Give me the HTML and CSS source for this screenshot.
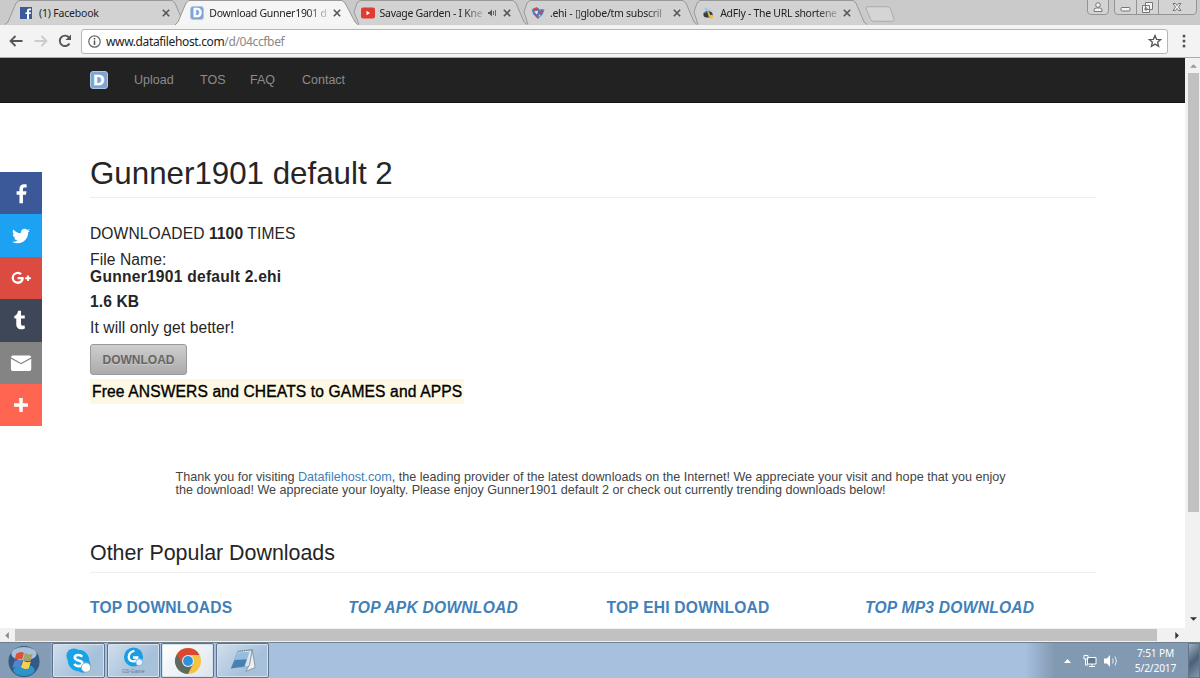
FILE: index.html
```
<!DOCTYPE html>
<html lang="en">

<head>
    <meta charset="UTF-8">
    <meta name="viewport" content="width=device-width, initial-scale=1.0">
    <title>Download Gunner1901 default 2</title>
    <link rel="stylesheet" href="styles.css">
</head>

<body>
    <!-- tabs -->
    <header class="tabs">
        <div class="tab">
            <svg class="tab-shape" viewBox="0 0 184 25"><path d="M0 24.5 3 22 11 3 14 .5H167L170 3 178 22 181 24.5"/></svg>
            <svg class="fav" viewBox="0 0 12 12"><rect width="12" height="12" fill="#3b5998"/><path d="M7 12V7H5.500V5.200H7V3.800C7 2.200 8 1.500 9.300 1.500H11V3.300H10C9.200 3.300 9 3.600 9 4.200V5.200H11L10.700 7H9V12z" fill="#fff"/></svg>
            <span class="tab-name">(1) Facebook</span>
            <svg class="close" viewBox="0 0 8 8"><path d="M.8.8 7.200 7.200M7.200.8.8 7.200"/></svg>
        </div>
        <div class="tab active">
            <svg class="tab-shape" viewBox="0 0 184 25"><path d="M0 25 3 22 11 3 14 .5H167L170 3 180 22 183 25"/></svg>
            <span class="d-logo small">D</span>
            <span class="tab-name fade">Download Gunner1901 d</span>
            <svg class="close" viewBox="0 0 8 8"><path d="M.8.8 7.200 7.200M7.200.8.8 7.200"/></svg>
        </div>
        <div class="tab">
            <svg class="tab-shape" viewBox="0 0 184 25"><path d="M13 24.500 8 12 11 3 14 .5H167L170 3 178 22 181 24.5"/></svg>
            <svg class="fav wide" viewBox="0 0 14 11"><rect width="14" height="11" rx="2" fill="#e03c31"/><path d="M5.500 3.300 9 5.500 5.500 7.700z" fill="#fff"/></svg>
            <span class="tab-name fade">Savage Garden - I Kne</span>
            <svg class="sound" viewBox="0 0 10 8"><path d="M0 3h1.500L4 .5v7L1.500 5H0z" fill="#555"/><path d="M5.500 2v4M7.500 1v6" stroke="#666" fill="none"/></svg>
            <svg class="close" viewBox="0 0 8 8"><path d="M.8.8 7.200 7.200M7.200.8.8 7.200"/></svg>
        </div>
        <div class="tab">
            <svg class="tab-shape" viewBox="0 0 184 25"><path d="M12 24.500 8 12 11 3 14 .5H167L170 3 178 22 181 24.5"/></svg>
            <svg class="fav wide" viewBox="0 0 14 13"><path d="M0 3 7 1 14 3 12 8 7 13 2 8z" fill="#4f7fc4"/><path d="M1 2 6 0 7 3 3 4zM8 4 13 4 11 7 8 7zM3 7 7 9 6 12z" fill="#d9473c"/><path d="M3 5 7 4 6 8zM8 1 11 2 9 3zM8 9 10 8 8 11z" fill="#eef"/></svg>
            <span class="tab-name fade">.ehi - ▯globe/tm subscril</span>
            <svg class="close" viewBox="0 0 8 8"><path d="M.8.8 7.200 7.200M7.200.8.8 7.200"/></svg>
        </div>
        <div class="tab">
            <svg class="tab-shape" viewBox="0 0 184 25"><path d="M12 24.500 8 12 11 3 14 .5H167L170 3 178 22 181 24.5"/></svg>
            <svg class="fav wide" viewBox="0 0 14 13"><path d="M5 0 8 4 6 6 3 2zM9 1 10 4 8 5z" fill="#9fc4e6"/><ellipse cx="7" cy="8" rx="5" ry="3.500" fill="#3c3c3c"/><path d="M6 5 8 5 10 10 8 11z" fill="#e3bd3e"/><circle cx="10.500" cy="10.500" r="2" fill="#e9c33f"/><path d="M2 6 4 5 5 7z" fill="#5b8cc0"/></svg>
            <span class="tab-name fade">AdFly - The URL shortene</span>
            <svg class="close" viewBox="0 0 8 8"><path d="M.8.8 7.200 7.200M7.200.8.8 7.200"/></svg>
        </div>
        <svg class="new-tab" viewBox="0 0 32 16"><path d="M2.500.5H23Q25 .5 26 2L30 13.500Q30 15 29 15.500H9Q6.500 15.500 6 14L1 2Q1 .5 2.500.5z" fill="#d5d5d5" stroke="#aaa"/></svg>
        <div class="window-buttons">
            <svg class="user" viewBox="0 0 22 15"><path d="M.5 0V11Q.5 14.500 4 14.500H18Q21.500 14.500 21.500 11V0" class="frame"/><circle cx="11" cy="5" r="2.300" class="ico"/><path d="M7 11.500V10Q7 8 9.500 8H12.500Q15 8 15 10V11.500z" class="ico"/></svg>
            <svg class="win" viewBox="0 0 83 15"><path d="M.5 0V11Q.5 14.500 4 14.500H79Q82.500 14.500 82.500 11V0M22.500 0V14M44.500 0V14" class="frame"/><rect x="7" y="7.500" width="9" height="3.500" rx="1" class="ico"/><path d="M31.500 2.500H38.500V9.500H31.500zM28.500 5.500H35.500V12.500H28.500zM31 8H33V10H31z" class="ico"/><path d="M59 3.500H61.500L63 5.500 64.500 3.500H67L64.500 7 67 10.500H64.500L63 8.500 61.500 10.500H59L61.500 7z" class="ico"/></svg>
        </div>
    </header>

    <!-- address bar -->
    <div class="toolbar">
        <svg class="nav-arrow" viewBox="0 0 14 12"><path d="M13.500 6H2M6.500 1 1.500 6 6.500 11"/></svg>
        <svg class="nav-arrow off" viewBox="0 0 14 12"><path d="M.5 6H12M7.500 1 12.500 6 7.500 11"/></svg>
        <svg class="reload" viewBox="0 0 14 14"><path d="M11.500 9.500A5.200 5.200 0 1 1 11 3.500" fill="none" stroke="#555" stroke-width="1.900"/><path d="M13 .5V6H7.500z" fill="#555"/></svg>
        <div class="address">
            <svg class="info" viewBox="0 0 13 13"><circle cx="6.500" cy="6.500" r="5.700" fill="none" stroke="#666" stroke-width="1.200"/><path d="M6.500 5.500V10M6.500 3V4.500" stroke="#555" stroke-width="1.500"/></svg>
            <span class="url">www.datafilehost.com<span class="path">/d/04ccfbef</span></span>
            <svg class="star" viewBox="0 0 14 14"><path d="M7 1.500 8.600 5.300 12.700 5.600 9.600 8.200 10.600 12.300 7 10.100 3.400 12.300 4.400 8.200 1.300 5.600 5.400 5.300z"/></svg>
        </div>
        <svg class="menu" viewBox="0 0 4 14"><circle cx="2" cy="2" r="1.500"/><circle cx="2" cy="7" r="1.500"/><circle cx="2" cy="12" r="1.500"/></svg>
    </div>

    <div class="viewport">
        <main class="page">
            <nav class="navbar">
                <span class="d-logo">D</span>
                <a class="nav-upload">Upload</a>
                <a class="nav-tos">TOS</a>
                <a class="nav-faq">FAQ</a>
                <a class="nav-contact">Contact</a>
            </nav>

            <section class="container">
                <h1>Gunner1901 default 2</h1>
                <div class="file-info">
                    <p class="times">DOWNLOADED <b>1100</b> TIMES</p>
                    <p class="file-label">File Name:</p>
                    <p class="file-name"><b>Gunner1901 default 2.ehi</b></p>
                    <p class="size"><b>1.6 KB</b></p>
                    <p class="desc">It will only get better!</p>
                </div>
                <button class="download">DOWNLOAD</button>
                <div><a class="promo">Free ANSWERS and CHEATS to GAMES and APPS</a></div>

                <p class="thanks">
                    Thank you for visiting <a>Datafilehost.com</a>, the leading provider of the latest downloads on the Internet! We appreciate your visit and hope that you enjoy<br>
                    the download! We appreciate your loyalty. Please enjoy Gunner1901 default 2 or check out currently trending downloads below!
                </p>

                <h2>Other Popular Downloads</h2>
                <div class="popular">
                    <a>TOP DOWNLOADS</a>
                    <a class="it">TOP APK DOWNLOAD</a>
                    <a>TOP EHI DOWNLOAD</a>
                    <a class="it">TOP MP3 DOWNLOAD</a>
                </div>
            </section>

            <!-- share buttons float over the page -->
            <aside class="share">
                <a class="fb"><svg viewBox="0 0 32 32"><path d="M17.500 26V17.300H20.600L21.100 13.700H17.500V11.600C17.500 10.500 17.900 9.800 19.400 9.800H21.300V6.600C20.900 6.500 19.800 6.400 18.600 6.400 15.800 6.400 13.900 8 13.900 11V13.700H10.900V17.300H13.900V26z"/></svg></a>
                <a class="tw"><svg viewBox="0 0 32 32"><path d="M28 8.600a9.900 9.900 0 0 1-2.800.8 5 5 0 0 0 2.200-2.700c-1 .6-2 1-3.100 1.200a4.900 4.900 0 0 0-8.500 3.300c0 .4 0 .8.100 1.100-4-.2-7.700-2.100-10.100-5.100a4.900 4.900 0 0 0 1.500 6.600c-.8 0-1.600-.3-2.200-.6v.1a4.900 4.900 0 0 0 3.900 4.800 5 5 0 0 1-2.200.1 4.900 4.900 0 0 0 4.600 3.400A9.900 9.900 0 0 1 4 23.600a14 14 0 0 0 7.500 2.200c9.100 0 14-7.500 14-14v-.6A10 10 0 0 0 28 8.600z"/></svg></a>
                <a class="gp"><svg viewBox="0 0 32 32"><path d="M11.500 14.500v3.200h4.600c-.5 1.700-1.900 2.900-4.500 2.900a5 5 0 0 1 0-10c1.300 0 2.400.4 3.300 1.300l2.300-2.300A8.200 8.200 0 1 0 11.600 24c4.900 0 8-3.300 8-7.900 0-.6-.1-1.100-.2-1.600zM24 12.500h2.500v2.500H29v2.500h-2.500V20H24v-2.500h-2.500V15H24z"/></svg></a>
                <a class="tm"><svg viewBox="0 0 32 32"><path d="M19.900 22.100c-.4.200-1.200.4-1.800.4-1.700 0-2.100-1.200-2.100-2.100v-6.200h4.300v-3.300H16V5.500h-3.200c0 0-.2 0-.2.200-.2 1.600-1 4.500-4.200 5.700v2.800h2.200v6.900c0 2.400 1.700 5.700 6.300 5.600 1.600 0 3.300-.7 3.700-1.200z"/></svg></a>
                <a class="ml"><svg viewBox="0 0 32 32"><path d="M4.500 9.500Q4.800 7.500 6.500 7.500H26Q27.500 7.500 27.700 9.500L16 16z"/><path d="M4.500 11 16 17.500 27.700 11V23Q27.700 25 25.700 25H6.500Q4.500 25 4.500 23z"/></svg></a>
                <a class="more"><svg viewBox="0 0 32 32"><path d="M14 8h4v6h6v4h-6v6h-4v-6H8v-4h6z"/></svg></a>
            </aside>
        </main>

        <div class="scroll-y">
            <svg viewBox="0 0 8 5"><path d="M0 4 4 0 8 4z" fill="#999"/></svg>
            <i class="thumb"></i>
            <svg viewBox="0 0 8 5"><path d="M0 0 4 4 8 0z" fill="#333"/></svg>
        </div>
    </div>

    <div class="scroll-x">
        <svg viewBox="0 0 5 8"><path d="M4 0 0 4 4 8z" fill="#888"/></svg>
        <i class="thumb"></i>
        <svg viewBox="0 0 5 8"><path d="M0 0 4 4 0 8z" fill="#333"/></svg>
    </div>

    <footer class="taskbar">
        <div class="start">
            <svg viewBox="0 0 34 34"><circle cx="17" cy="17" r="16" fill="#315b84"/><ellipse cx="17" cy="9" rx="13" ry="7" fill="#a9c1d8"/><ellipse cx="17" cy="26" rx="11" ry="6" fill="#2d93c8"/><path d="M9 9Q13 6 17 8L15 15Q11 13 7 16z" fill="#dc5236"/><path d="M18 8Q22 11 26 9L24 16Q20 18 16 15z" fill="#a5a268"/><path d="M7 17Q11 14 15 16L13 23Q9 21 5 24z" fill="#5284cf"/><path d="M16 16Q20 19 24 17L22 24Q18 26 14 23z" fill="#ffcf48"/></svg>
        </div>
        <div class="task">
            <svg viewBox="0 0 30 30"><circle cx="9.500" cy="9.500" r="8" fill="#18a2e8"/><circle cx="19.500" cy="19.500" r="8" fill="#18a2e8"/><circle cx="14.500" cy="14.500" r="11.500" fill="#18a2e8"/><path d="M18.500 10.500Q17 8.500 14.200 8.500 10.500 8.500 10.500 11.300 10.500 13.500 14.500 14.400 18.700 15.300 18.700 17.600 18.700 20.500 14.700 20.500 11.500 20.500 10 18" fill="none" stroke="#fff" stroke-width="2.800"/><circle cx="22.500" cy="22" r="5" fill="#fff" stroke="#9aa"/></svg>
        </div>
        <div class="task gclub">
            <svg viewBox="0 0 24 22"><circle cx="12" cy="10.500" r="10" fill="#1c9de0"/><path d="M13 4Q7 5 7 10.500 7 15 12 15 16 15 16 11H11.500" fill="none" stroke="#fff" stroke-width="2.400"/><circle cx="18" cy="16" r="3.600" fill="#eef" stroke="#6bb8e4"/></svg>
            <small>GS-Game</small>
        </div>
        <div class="task current">
            <svg viewBox="0 0 28 28"><circle cx="14" cy="14" r="13" fill="#f5c242"/><path d="M14 14 2.740 7.500A13 13 0 0 0 14 27L19 17z" fill="#5c6a61"/><path d="M14 8H25.500A13 13 0 0 0 2.740 7.500L8.500 17z" fill="#da4733"/><circle cx="14" cy="14" r="6" fill="#e9eef2"/><circle cx="14" cy="14" r="4.900" fill="#2d93dc"/></svg>
        </div>
        <div class="task">
            <svg viewBox="0 0 30 28"><path d="M9 4 25 2 22 20 3 21z" fill="#dbe7f1" stroke="#93a6b8"/><path d="M9 5 22 4 17 20 2 22z" fill="#94bddf"/><path d="M6 13 19 12 16.500 20 2 22z" fill="#4a7fb2"/><path d="M25 2 28 21 18 25 22 18z" fill="#edf1f4" stroke="#8794a1"/><path d="M10 3.500 25 2" stroke="#596b7b" stroke-dasharray="1 1"/></svg>
        </div>
        <div class="tray">
            <svg class="up" viewBox="0 0 7 4"><path d="M0 4 3.500 0 7 4z" fill="#fff"/></svg>
            <svg class="net" viewBox="0 0 14 14"><path d="M4.500 3.500H13V10H4.500z" fill="#64788f" stroke="#fff"/><path d="M6 12.500H12M9 10V12M2.500 5V11H5M1 1.500H5V5H1z" fill="none" stroke="#fff"/></svg>
            <svg class="vol" viewBox="0 0 14 14"><path d="M0 4.500H3L6 1V13L3 9.500H0z" fill="#fff"/><path d="M8.500 4.500Q10 7 8.500 9.500M11 2.500Q14 7 11 11.500" fill="none" stroke="#e4edf5"/></svg>
            <div class="clock">7:51 PM<br>5/2/2017</div>
            <i class="show-desktop"></i>
        </div>
    </footer>
</body>

</html>
```
FILE: styles.css
```
* {
    padding: 0;
    margin: 0;
    box-sizing: border-box;
}

:root {
    --link: #4180b8;
    --text: #252525;
    --scroll: #c1c1c1;
}

body {
    width: 1200px;
    height: 678px;
    overflow: hidden;
    display: flex;
    flex-direction: column;
    background: #fff;
    color: var(--text);
    font-family: "Liberation Sans", Arial, sans-serif;
}

svg {
    display: block;
    flex: none;
}

/* tabs */
.tabs {
    height: 25px;
    flex: none;
    display: flex;
    padding-left: 5px;
    background: #cacaca;
    font-family: "Noto Sans", sans-serif;
    font-size: 10.5px;
    letter-spacing: -.2px;
}

.tab {
    position: relative;
    width: 170.3px;
    flex: none;
    height: 25px;
    padding: 1px 5px 0 15px;
    display: flex;
    align-items: center;
}

.tab-shape {
    position: absolute;
    left: 0;
    top: 0;
    width: 184px;
    height: 25px;
}

.tab-shape path {
    fill: #d2d2d2;
    stroke: #999;
}

.tab.active {
    z-index: 1;
}

.active .tab-shape path {
    fill: #f5f5f5;
}

.fav,
.tab-name,
.close,
.sound,
.tab .d-logo {
    position: relative;
}

.fav {
    width: 12px;
    height: 12px;
    margin-right: 7px;
}

.fav.wide {
    width: 14px;
    margin-right: 5px;
}

.tab-name {
    flex: 1;
    min-width: 0;
    white-space: nowrap;
    line-height: 16px;
    color: #222;
}

.fade {
    letter-spacing: -.28px;
    -webkit-mask-image: linear-gradient(to right, #000 82%, transparent 104%);
    mask-image: linear-gradient(to right, #000 82%, transparent 104%);
}

.close {
    width: 8px;
    height: 8px;
    margin-left: 5px;
}

.close path {
    stroke: #555;
    stroke-width: 1.6;
}

.sound {
    width: 10px;
    height: 8px;
    margin: 0 0 0 6px;
}

.new-tab {
    width: 31px;
    height: 16px;
    margin: 6px 0 0 9px;
}

.window-buttons {
    display: flex;
    gap: 5px;
    margin-left: auto;
    padding-right: 3px;
}

.user {
    width: 22px;
    height: 15px;
}

.win {
    width: 83px;
    height: 15px;
}

.frame {
    fill: #d3d3d3;
    stroke: #949494;
}

.ico {
    fill: #f4f4f4;
    stroke: #777;
}

.d-logo {
    width: 18px;
    height: 18px;
    flex: none;
    border-radius: 3px;
    background: #7da4d2;
    border: 1px solid #b0c8e4;
    color: #fff;
    font: bold 15px/16px "Liberation Sans", sans-serif;
    text-align: center;
    -webkit-text-stroke: .6px #fff;
}

.d-logo.small {
    width: 14px;
    height: 14px;
    margin-right: 5px;
    font-size: 12px;
    line-height: 12px;
    letter-spacing: 0;
}

/* address bar */
.toolbar {
    height: 33px;
    flex: none;
    display: flex;
    align-items: center;
    padding: 0 14px 0 9px;
    background: #f3f3f3;
    border-bottom: 1px solid #aaa;
}

.nav-arrow {
    width: 14px;
    height: 12px;
    margin-right: 11px;
}

.nav-arrow.off {
    margin-right: 10px;
}

.nav-arrow path {
    fill: none;
    stroke: #555;
    stroke-width: 1.8;
}

.nav-arrow.off path {
    stroke: #ccc;
}

.reload {
    width: 14px;
    height: 14px;
}

.address {
    flex: 1;
    height: 25px;
    margin: 0 14px 0 9px;
    padding: 0 5px 0 6px;
    display: flex;
    align-items: center;
    background: #fff;
    border: 1px solid #b5b5b5;
    border-radius: 3px;
}

.info {
    width: 13px;
    height: 13px;
    margin-right: 5px;
}

.url {
    flex: 1;
    padding-top: 1px;
    font: 12px/20px "Noto Sans", sans-serif;
    letter-spacing: -.36px;
    color: #222;
}

.path {
    color: #888;
}

.star {
    width: 14px;
    height: 14px;
}

.star path {
    fill: none;
    stroke: #555;
    stroke-width: 1.3;
}

.menu {
    width: 4px;
    height: 14px;
    fill: #555;
}

/* page */
.viewport {
    height: 570px;
    flex: none;
    display: flex;
}

.page {
    position: relative;
    width: 1185px;
    overflow: hidden;
}

.navbar {
    height: 45px;
    display: flex;
    align-items: center;
    padding-left: 90px;
    background: #222;
    border-bottom: 1px solid #111;
    color: #8c8c8c;
    font-size: 12.5px;
}

.nav-upload {
    margin-left: 26px;
    width: 66px;
}

.nav-tos {
    width: 50px;
}

.nav-faq {
    width: 52px;
}

.container {
    width: 1096px;
    padding-left: 90px;
}

h1 {
    height: 95px;
    padding-top: 51px;
    border-bottom: 1px solid #eee;
    font-size: 31.3px;
    font-weight: normal;
    line-height: 40px;
}

.file-info {
    padding-top: 27px;
    font-size: 15.6px;
    line-height: 17px;
    letter-spacing: .1px;
}

.file-name {
    letter-spacing: .25px;
}

.times {
    margin-bottom: 9px;
}

.file-name {
    margin-bottom: 8px;
}

.size {
    margin-bottom: 9px;
}

.desc {
    margin-bottom: 8px;
}

.download {
    display: block;
    width: 97px;
    height: 31px;
    border: 1px solid #999;
    border-radius: 3px;
    background: linear-gradient(#cecece, #ababab);
    color: #666;
    font: bold 12px "Liberation Sans", sans-serif;
    text-shadow: 0 1px 0 #ccc;
}

.promo {
    display: inline-block;
    height: 25px;
    margin-top: 4px;
    padding: 0 2px;
    background: #fcf8e3;
    color: #000;
    font-size: 15.6px;
    line-height: 25px;
    letter-spacing: .14px;
    -webkit-text-stroke: .35px #000;
}

.thanks {
    margin-top: 67px;
    padding-left: 85.5px;
    font-size: 12.6px;
    line-height: 13.3px;
    color: #444;
    white-space: nowrap;
}

.thanks a {
    color: var(--link);
}

h2 {
    height: 37px;
    margin-top: 38px;
    padding-top: 1px;
    border-bottom: 1px solid #eee;
    font-size: 21.4px;
    font-weight: normal;
    line-height: 32px;
}

.popular {
    display: grid;
    grid-template-columns: repeat(4, 258.3px);
    padding-top: 26px;
    color: var(--link);
    font-size: 15.6px;
    font-weight: bold;
    line-height: 18px;
    letter-spacing: .2px;
}

.it {
    font-style: italic;
    letter-spacing: .25px;
}

.share {
    position: absolute;
    left: 0;
    top: 114px;
    width: 42px;
}

.share a {
    height: 42.4px;
    display: flex;
    align-items: center;
    justify-content: center;
}

.share svg {
    width: 28px;
    height: 28px;
    fill: #fff;
}

.share .fb svg {
    width: 31px;
    height: 31px;
}

.share .tw svg,
.share .gp svg {
    width: 24px;
    height: 24px;
}

.fb { background: #3b5998; }
.tw { background: #1da1f2; }
.gp { background: #dc4b3f; }
.tm { background: #3d4757; }
.ml { background: #848484; }
.more { background: #ff6550; }

/* scrollbars */
.scroll-y {
    width: 15px;
    display: flex;
    flex-direction: column;
    align-items: center;
    padding: 6px 1px 6px 2px;
    background: #f1f1f1;
}

.scroll-y svg {
    width: 7px;
    height: 5px;
}

.scroll-y .thumb {
    width: 11px;
    height: 439px;
    margin: 4px 0 auto;
    background: var(--scroll);
}

.scroll-x {
    height: 14px;
    flex: none;
    display: flex;
    align-items: center;
    padding: 0 20px 0 5px;
    background: #f1f1f1;
}

.scroll-x svg {
    width: 5px;
    height: 7px;
}

.scroll-x .thumb {
    width: 1142px;
    height: 12px;
    margin: 0 auto 0 5px;
    background: var(--scroll);
}

/* taskbar */
.taskbar {
    height: 36px;
    flex: none;
    display: flex;
    background: linear-gradient(to right, #849cb6 50px, #a7c0de 54px, #a7c0de 1025px, #8299b2 1055px);
    border-top: 1px solid #71808f;
}

.start {
    width: 52px;
    padding: 2px 0 0 7px;
}

.start svg {
    width: 34px;
    height: 33px;
}

.task {
    width: 53px;
    height: 35px;
    margin-right: 1.7px;
    display: flex;
    flex-direction: column;
    align-items: center;
    justify-content: center;
    border: 1px solid #5f7489;
    border-radius: 2px;
    box-shadow: inset 0 0 0 1px #d6e3ef;
    background: linear-gradient(135deg, #d0dfec, #a7c1db 65%);
}

.task svg {
    width: 28px;
    height: 28px;
}

.task.current {
    background: linear-gradient(135deg, #fff, #dce5ec);
}

.gclub svg {
    width: 23px;
    height: 21px;
}

.gclub small {
    font-size: 5px;
    line-height: 6px;
    color: #61798e;
}

.tray {
    flex: 1;
    display: flex;
    align-items: center;
    justify-content: flex-end;
    color: #fff;
}

.up {
    width: 7px;
    height: 4px;
    margin-right: 12px;
}

.net,
.vol {
    width: 14px;
    height: 14px;
    margin-right: 7px;
}

.vol {
    margin-right: 5px;
}

.clock {
    width: 65px;
    padding-top: 1px;
    text-align: center;
    font: 10.2px/15px "Noto Sans", sans-serif;
    letter-spacing: -.15px;
}

.show-desktop {
    width: 12px;
    height: 35px;
    border: 1px solid #63758a;
    background: linear-gradient(135deg, #9fb1c2, #4c6178 50%, #8599ae);
}
```
